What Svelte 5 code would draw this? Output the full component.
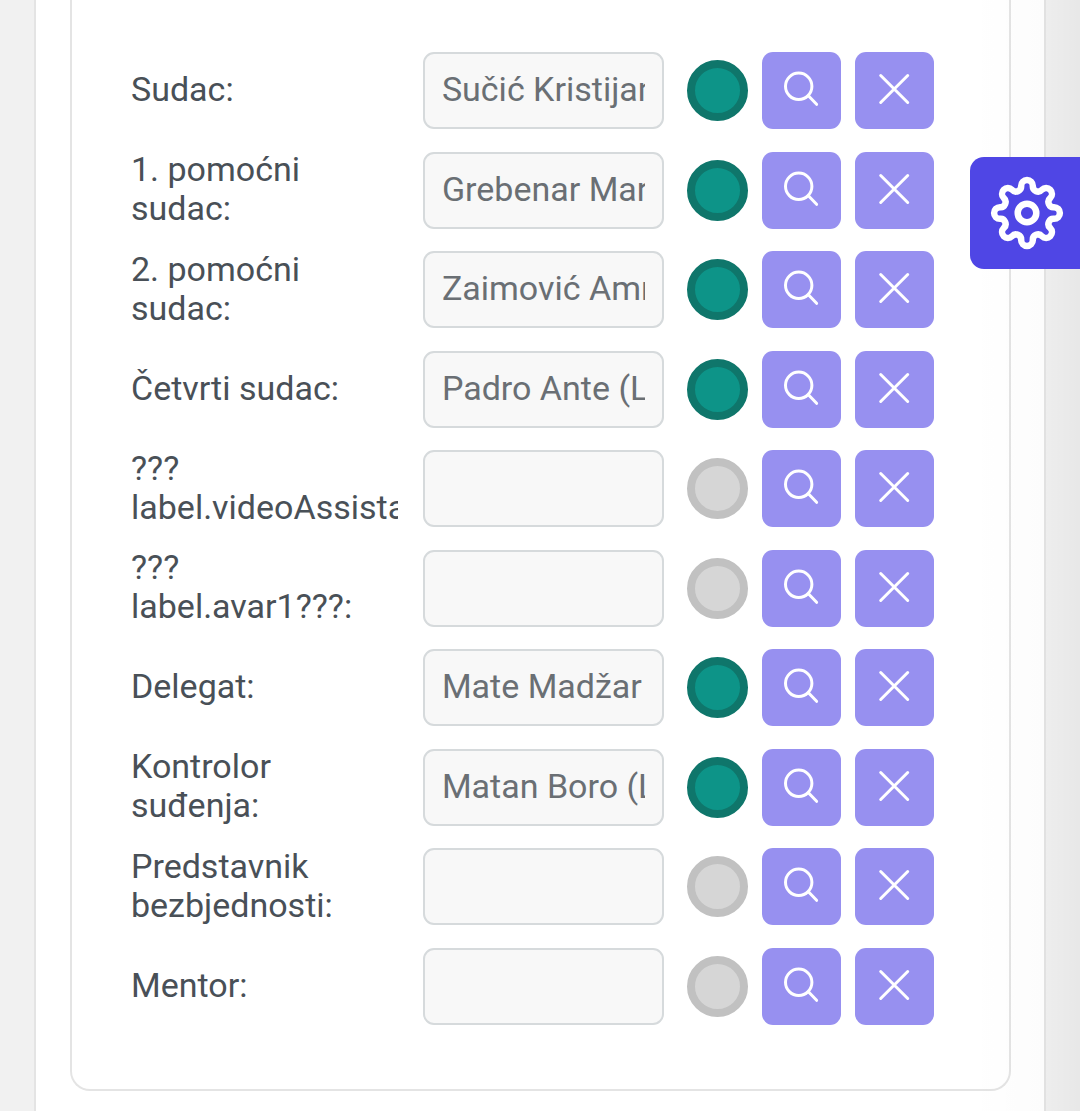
<script>
  const officials = [
    { id: 'sudac', label: 'Sudac:', value: 'Sučić Kristijan (Livno)' },
    { id: 'pomocni1', label: '1. pomoćni sudac:', value: 'Grebenar Mario (Livno)' },
    { id: 'pomocni2', label: '2. pomoćni sudac:', value: 'Zaimović Amr (Livno)' },
    { id: 'cetvrti', label: 'Četvrti sudac:', value: 'Padro Ante (Livno)' },
    { id: 'var', label: '??? label.videoAssistant???:', value: '' },
    { id: 'avar', label: '??? label.avar1???:', value: '' },
    { id: 'delegat', label: 'Delegat:', value: 'Mate Madžar' },
    { id: 'kontrolor', label: 'Kontrolor suđenja:', value: 'Matan Boro (Livno)' },
    { id: 'predstavnik', label: 'Predstavnik bezbjednosti:', value: '' },
    { id: 'mentor', label: 'Mentor:', value: '' },
  ];

  // Gear outline: eight rounded teeth joined by rounded valleys.
  function gearPath(c, toothCentre, toothR, valleyCentre, valleyR) {
    const at = (r, a) => [r * Math.cos(a), r * Math.sin(a)];
    const t = toothR / (toothR + valleyR);
    const join = (a, b) => {
      const [x1, y1] = at(toothCentre, a);
      const [x2, y2] = at(valleyCentre, b);
      return `${(c + x1 + (x2 - x1) * t).toFixed(2)} ${(c + y1 + (y2 - y1) * t).toFixed(2)}`;
    };
    const half = Math.PI / 8;
    let d = `M${join(0, -half)}`;
    for (let i = 0; i < 8; i++) {
      const a = i * 2 * half;
      d += `A${toothR} ${toothR} 0 0 1 ${join(a, a + half)}`;
      d += `A${valleyR} ${valleyR} 0 0 0 ${join(a + 2 * half, a + half)}`;
    }
    return d + 'Z';
  }
  const gear = gearPath(37, 27.3, 5.8, 29, 5.2);
</script>

<div class="page">
  <main class="panel">
    <form class="card">
      {#each officials as o (o.id)}
        <div class="row">
          <label for={o.id}>{o.label}</label>
          <input id={o.id} type="text" value={o.value} readonly />
          <span class="status" class:on={o.value} role="img" aria-label={o.value ? 'Postavljen' : 'Nije postavljen'}></span>
          <button type="button" class="action" aria-label="Traži">
            <svg viewBox="0 0 36 36" aria-hidden="true">
              <circle cx="15.700" cy="15.300" r="13.200" />
              <path d="M25.400 24.800L33.600 33.300" />
            </svg>
          </button>
          <button type="button" class="action" aria-label="Ukloni">
            <svg viewBox="0 0 36 36" aria-hidden="true">
              <path d="M4.700 4.500L31.700 31.500M31.700 4.500L4.700 31.500" />
            </svg>
          </button>
        </div>
      {/each}
    </form>
  </main>
  <div class="edge"></div>
  <button type="button" class="settings" aria-label="Postavke">
    <svg viewBox="0 0 74 74" aria-hidden="true">
      <path d={gear} />
      <circle cx="37" cy="37" r="9.3" />
    </svg>
  </button>
</div>

<style>
  :global(body) {
    margin: 0;
    background: #f1f1f1;
  }
  .page {
    position: relative;
    box-sizing: border-box;
    display: flex;
    min-height: 100vh;
    padding: 0 34px;
    overflow: hidden;
    font-family: Roboto, 'Liberation Sans', sans-serif;
    font-size: 34px;
    line-height: 39px;
    color: #495057;
  }
  .panel {
    flex: 1;
    min-width: 0;
    display: flex;
    padding: 0 33px 20px 34px;
    background: #fff;
    border: solid #e4e4e4;
    border-width: 0 2px;
  }
  .card {
    flex: 1;
    min-width: 0;
    display: flex;
    flex-direction: column;
    justify-content: space-between;
    gap: 20px;
    padding: 52px 75px 64px 59px;
    border: 2px solid #e4e4e4;
    border-top: 0;
    border-radius: 0 0 20px 20px;
  }
  .row {
    display: grid;
    grid-template-columns: minmax(0, 10fr) minmax(0, 9fr) 61px 79px 79px;
    column-gap: 14px;
    align-items: center;
    height: 77px;
  }
  label {
    margin-right: 11px;
    overflow: hidden;
    padding-bottom: 2px;
  }
  input {
    box-sizing: border-box;
    width: auto;
    min-width: 0;
    height: 77px;
    margin: 0 9px 0 0;
    padding: 0 17px 3px;
    font: inherit;
    color: #6a6f74;
    background: #f8f8f8;
    border: 2px solid #d6dadc;
    border-radius: 11px;
    outline: none;
  }
  .status {
    box-sizing: border-box;
    width: 61px;
    height: 61px;
    border: 8px solid #c1c1c1;
    border-radius: 50%;
    background: #d6d6d6;
  }
  .status.on {
    border-color: #0f766b;
    background: #0d9488;
  }
  .action {
    display: flex;
    align-items: center;
    justify-content: center;
    height: 77px;
    padding: 0 1px 3px 0;
    border: 0;
    border-radius: 11px;
    background: #9790f0;
  }
  svg {
    display: block;
    fill: none;
    stroke: #fff;
    stroke-linecap: round;
    stroke-linejoin: round;
  }
  .action svg {
    width: 36px;
    height: 36px;
    stroke-width: 3;
  }
  .edge {
    position: absolute;
    inset: 0 0 0 auto;
    width: 110px;
    background: linear-gradient(to right, transparent, rgba(0, 0, 0, 0.01) 65%, rgba(0, 0, 0, 0.04));
    pointer-events: none;
  }
  .settings {
    position: absolute;
    top: 157px;
    right: 0;
    display: flex;
    align-items: center;
    justify-content: center;
    width: 110px;
    height: 112px;
    padding: 0 0 0 3px;
    border: 0;
    border-radius: 14px 0 0 14px;
    background: #4f46e5;
  }
  .settings svg {
    width: 74px;
    height: 74px;
    stroke-width: 6.5;
  }
</style>
